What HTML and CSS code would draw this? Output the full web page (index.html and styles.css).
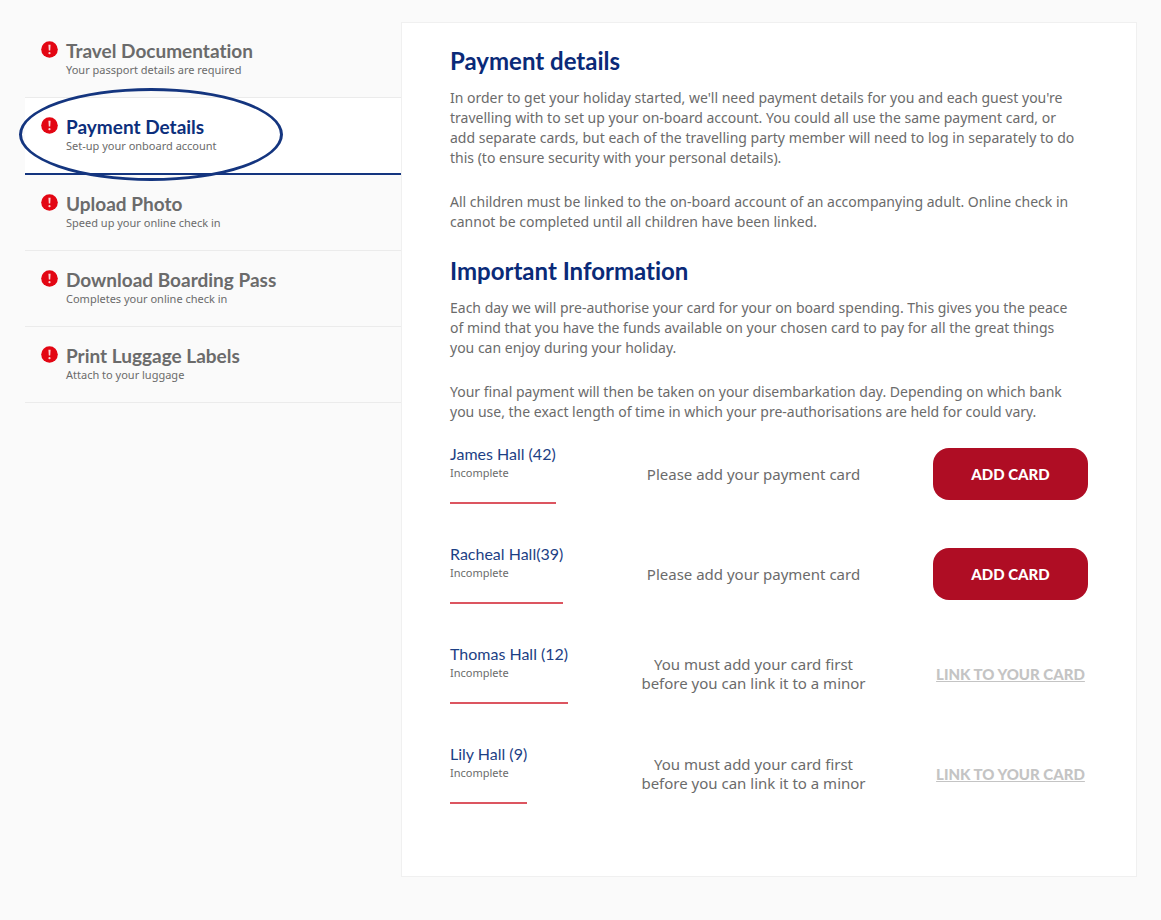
FILE: index.html
```html
<!DOCTYPE html>
<html lang="en">

<head>
    <meta charset="UTF-8" />
    <meta name="viewport" content="width=device-width, initial-scale=1" />
    <title>Payment details</title>
    <link rel="stylesheet" href="styles.css">
</head>

<body>

    <svg class="sprite" aria-hidden="true">
        <symbol id="alert" viewBox="0 0 17 17">
            <circle cx="8.5" cy="8.5" r="8.3" fill="#e30613" />
            <path d="M7.4 3.8h2.2l-.4 5.8H7.8z" fill="#fbd5d8" />
            <circle cx="8.5" cy="12.2" r="1.1" fill="#fbd5d8" />
        </symbol>
    </svg>

    <div class="page">
        <nav class="steps">
            <a class="step" href="#travel">
                <svg class="step-icon"><use href="#alert" /></svg>
                <span class="step-text">
                    <span class="step-title">Travel Documentation</span>
                    <span class="step-sub">Your passport details are required</span>
                </span>
            </a>
            <a class="step active" href="#payment">
                <svg class="step-icon"><use href="#alert" /></svg>
                <span class="step-text">
                    <span class="step-title">Payment Details</span>
                    <span class="step-sub">Set-up your onboard account</span>
                </span>
                <span class="ring"></span>
            </a>
            <a class="step" href="#photo">
                <svg class="step-icon"><use href="#alert" /></svg>
                <span class="step-text">
                    <span class="step-title">Upload Photo</span>
                    <span class="step-sub">Speed up your online check in</span>
                </span>
            </a>
            <a class="step" href="#boarding">
                <svg class="step-icon"><use href="#alert" /></svg>
                <span class="step-text">
                    <span class="step-title">Download Boarding Pass</span>
                    <span class="step-sub">Completes your online check in</span>
                </span>
            </a>
            <a class="step" href="#luggage">
                <svg class="step-icon"><use href="#alert" /></svg>
                <span class="step-text">
                    <span class="step-title">Print Luggage Labels</span>
                    <span class="step-sub">Attach to your luggage</span>
                </span>
            </a>
        </nav>

        <main class="panel">
            <section class="info">
                <h2>Payment details</h2>
                <p>In order to get your holiday started, we'll need payment details for you and each guest you're<br>
                    travelling with to set up your on-board account. You could all use the same payment card, or<br>
                    add separate cards, but each of the travelling party member will need to log in separately to do<br>
                    this (to ensure security with your personal details).</p>
                <p>All children must be linked to the on-board account of an accompanying adult. Online check in<br>
                    cannot be completed until all children have been linked.</p>
            </section>

            <section class="info">
                <h2>Important Information</h2>
                <p>Each day we will pre-authorise your card for your on board spending. This gives you the peace<br>
                    of mind that you have the funds available on your chosen card to pay for all the great things<br>
                    you can enjoy during your holiday.</p>
                <p>Your final payment will then be taken on your disembarkation day. Depending on which bank<br>
                    you use, the exact length of time in which your pre-authorisations are held for could vary.</p>
            </section>

            <div class="guests">
                <div class="guest">
                    <div class="guest-name">
                        <h3>James Hall (42)</h3>
                        <span class="status">Incomplete</span>
                    </div>
                    <p class="message">Please add your payment card</p>
                    <button class="add-card" type="button">ADD CARD</button>
                </div>
                <div class="guest">
                    <div class="guest-name">
                        <h3>Racheal Hall(39)</h3>
                        <span class="status">Incomplete</span>
                    </div>
                    <p class="message">Please add your payment card</p>
                    <button class="add-card" type="button">ADD CARD</button>
                </div>
                <div class="guest">
                    <div class="guest-name">
                        <h3>Thomas Hall (12)</h3>
                        <span class="status">Incomplete</span>
                    </div>
                    <p class="message">You must add your card first<br>before you can link it to a minor</p>
                    <a class="link-card" href="#link">LINK TO YOUR CARD</a>
                </div>
                <div class="guest">
                    <div class="guest-name">
                        <h3>Lily Hall (9)</h3>
                        <span class="status">Incomplete</span>
                    </div>
                    <p class="message">You must add your card first<br>before you can link it to a minor</p>
                    <a class="link-card" href="#link">LINK TO YOUR CARD</a>
                </div>
            </div>
        </main>
    </div>

</body>

</html>
```
FILE: styles.css
```css
* {
    box-sizing: border-box;
}
body {
    margin: 0;
    background: #fafafa;
    color: #6b6b6b;
    font-family: "Noto Sans", "Open Sans", sans-serif;
    font-size: 14px;
    line-height: 20px;
}
h2, h3, p {
    margin: 0;
}
.sprite {
    display: none;
}
.page {
    display: flex;
    align-items: flex-start;
    padding: 22px 24px 40px 25px;
}

/* steps */
.steps {
    flex: 0 0 376px;
}
.step {
    position: relative;
    display: flex;
    gap: 8px;
    padding: 19px 16px;
    border-bottom: 1px solid #ebebeb;
    color: inherit;
    text-decoration: none;
}
.step-icon {
    flex: none;
    width: 17px;
    height: 17px;
}
.step-text {
    display: flex;
    flex-direction: column;
}
.step-title {
    font: bold 19px/20px Lato, sans-serif;
    font-variant-ligatures: none;
}
.step-sub {
    font-size: 11px;
    line-height: 17px;
}
.active {
    background: #fff;
    border-bottom: 2px solid #14357f;
}
.active .step-title {
    color: #0c2f7c;
}
.ring {
    position: absolute;
    left: -6px;
    top: -10px;
    width: 264px;
    height: 93px;
    border: 3px solid #14357f;
    border-radius: 50%;
    z-index: 1;
    pointer-events: none;
}

/* content */
.panel {
    flex: 1;
    min-width: 0;
    padding: 25px 48px 72px;
    background: #fff;
    border: 1px solid #f0f0f0;
}
.info {
    margin-bottom: 26px;
}
.info h2 {
    margin-bottom: 14px;
    color: #0a2a78;
    font: bold 24px/26px Lato, sans-serif;
    font-variant-ligatures: none;
}
.info p + p {
    margin-top: 24px;
}

/* guests */
.guests {
    display: grid;
    gap: 40px;
    margin-top: -4px;
}
.guest {
    display: grid;
    grid-template-columns: 124px 1fr 155px;
    align-items: center;
}
.guest-name {
    justify-self: start;
    padding-bottom: 20px;
    border-bottom: 2px solid #dc5560;
}
.guest-name h3 {
    color: #1d3f85;
    font: 16px/20px Lato, sans-serif;
}
.status {
    display: block;
    font-size: 11px;
    line-height: 18px;
}
.message {
    text-align: center;
    font-size: 15px;
    line-height: 19px;
}
.add-card {
    height: 52px;
    border: 0;
    border-radius: 16px;
    background: #af0d24;
    color: #fff;
    font: 900 15px/20px Lato, sans-serif;
    cursor: pointer;
}
.link-card {
    color: #c4c4c4;
    font: 900 15px/20px Lato, sans-serif;
    text-align: center;
    white-space: nowrap;
}
```
